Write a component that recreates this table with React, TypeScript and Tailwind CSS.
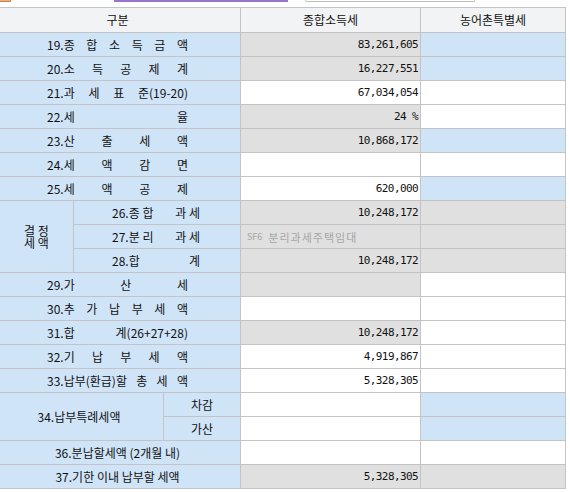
import React from "react";

const BG: Record<string, string> = {
  g: "bg-[#e0e0e0]",
  w: "bg-white",
  b: "bg-[#d0e4f8]",
};

function Lab({ items }: { items: string[] }) {
  return (
    <div className="col-span-3 bg-[#d0e4f8] flex items-center pl-[47px]">
      <div className="w-[141px] flex justify-between whitespace-pre">
        {items.map((t, i) => (
          <span key={i}>{t}</span>
        ))}
      </div>
    </div>
  );
}

function SubLab({ items }: { items: string[] }) {
  return (
    <div className="col-span-2 bg-[#d0e4f8] flex items-center pl-[38px]">
      <div className="w-[88px] flex justify-between whitespace-pre">
        {items.map((t, i) => (
          <span key={i}>{t}</span>
        ))}
      </div>
    </div>
  );
}

function CLab({ text, span }: { text: string; span: string }) {
  return (
    <div className={`${span} bg-[#d0e4f8] flex items-center justify-center pr-[5px] whitespace-pre`}>
      {text}
    </div>
  );
}

function Val({ v = "", bg }: { v?: string; bg: string }) {
  return (
    <div
      className={`${BG[bg]} flex items-center justify-end pr-[2px] font-['DejaVu_Sans_Mono',monospace] text-[11px] tracking-[-0.6px] whitespace-pre`}
    >
      {v}
    </div>
  );
}

export default function App() {
  return (
    <div className="w-[570px] h-[492px] bg-white overflow-hidden font-['Noto_Sans_CJK_KR',sans-serif] text-[12px] leading-[14px] text-[#111]">
      <div className="h-[7px] flex items-start">
        <div className="w-[11px] h-[2px] bg-[#e6b07a] border-b border-r border-[#d0884a]" />
        <div className="ml-[103px] w-[174px] h-[2px] border-b-2 border-x-2 border-[#9b72cf]" />
        <div className="ml-[17px] w-[170px] h-[2px] border-b border-x border-[#bdbdbd] rounded-b-[2px]" />
      </div>
      <div className="w-[566px] grid grid-cols-[73px_89px_76px_179px_144px] grid-rows-[24px_repeat(19,23px)] gap-px bg-[#c3c3c8] pt-px pr-px pb-px">
        <div className="col-span-3 bg-[#f2f3f5] flex items-center justify-center pr-[5px]">구분</div>
        <div className="bg-[#f2f3f5] flex items-center justify-center">종합소득세</div>
        <div className="bg-[#f2f3f5] flex items-center justify-center">농어촌특별세</div>

        <Lab items={["19.종", "합", "소", "득", "금", "액"]} />
        <Val v="83,261,605" bg="g" />
        <Val bg="b" />

        <Lab items={["20.소", "득", "공", "제", "계"]} />
        <Val v="16,227,551" bg="g" />
        <Val bg="b" />

        <Lab items={["21.과", "세", "표", "준(19-20)"]} />
        <Val v="67,034,054" bg="w" />
        <Val bg="w" />

        <Lab items={["22.세", "율"]} />
        <Val v="24 %" bg="g" />
        <Val bg="w" />

        <Lab items={["23.산", "출", "세", "액"]} />
        <Val v="10,868,172" bg="g" />
        <Val bg="b" />

        <Lab items={["24.세", "액", "감", "면"]} />
        <Val bg="w" />
        <Val bg="w" />

        <Lab items={["25.세", "액", "공", "제"]} />
        <Val v="620,000" bg="w" />
        <Val bg="b" />

        <div className="row-span-3 bg-[#d0e4f8] flex items-center justify-center">
          <div className="leading-[12px] whitespace-pre text-center">
            {"결 정"}
            <br />
            {"세 액"}
          </div>
        </div>
        <SubLab items={["26.종 합", "과 세"]} />
        <Val v="10,248,172" bg="g" />
        <Val bg="g" />

        <SubLab items={["27.분 리", "과 세"]} />
        <div className="bg-[#e0e0e0] flex items-center pl-[6px] text-[#a6a6a6] whitespace-pre">
          <span className="text-[9px]">SF6 </span>
          <span className="text-[11px] tracking-[1px] ml-[4px]">분리과세주택임대</span>
        </div>
        <Val bg="g" />

        <SubLab items={["28.합", "계"]} />
        <Val v="10,248,172" bg="g" />
        <Val bg="g" />

        <Lab items={["29.가", "산", "세"]} />
        <Val bg="g" />
        <Val bg="w" />

        <Lab items={["30.추", "가", "납", "부", "세", "액"]} />
        <Val bg="w" />
        <Val bg="w" />

        <Lab items={["31.합", "계(26+27+28)"]} />
        <Val v="10,248,172" bg="g" />
        <Val bg="w" />

        <Lab items={["32.기", "납", "부", "세", "액"]} />
        <Val v="4,919,867" bg="w" />
        <Val bg="w" />

        <Lab items={["33.납부(환급)할", "총", "세", "액"]} />
        <Val v="5,328,305" bg="w" />
        <Val bg="w" />

        <CLab text="34.납부특례세액" span="col-span-2 row-span-2" />
        <div className="bg-[#d0e4f8] flex items-center justify-center">차감</div>
        <Val bg="w" />
        <Val bg="b" />

        <div className="bg-[#d0e4f8] flex items-center justify-center">가산</div>
        <Val bg="w" />
        <Val bg="b" />

        <CLab text="36.분납할세액 (2개월 내)" span="col-span-3" />
        <Val bg="w" />
        <Val bg="w" />

        <CLab text="37.기한 이내 납부할 세액" span="col-span-3" />
        <Val v="5,328,305" bg="g" />
        <Val bg="g" />
      </div>
    </div>
  );
}
